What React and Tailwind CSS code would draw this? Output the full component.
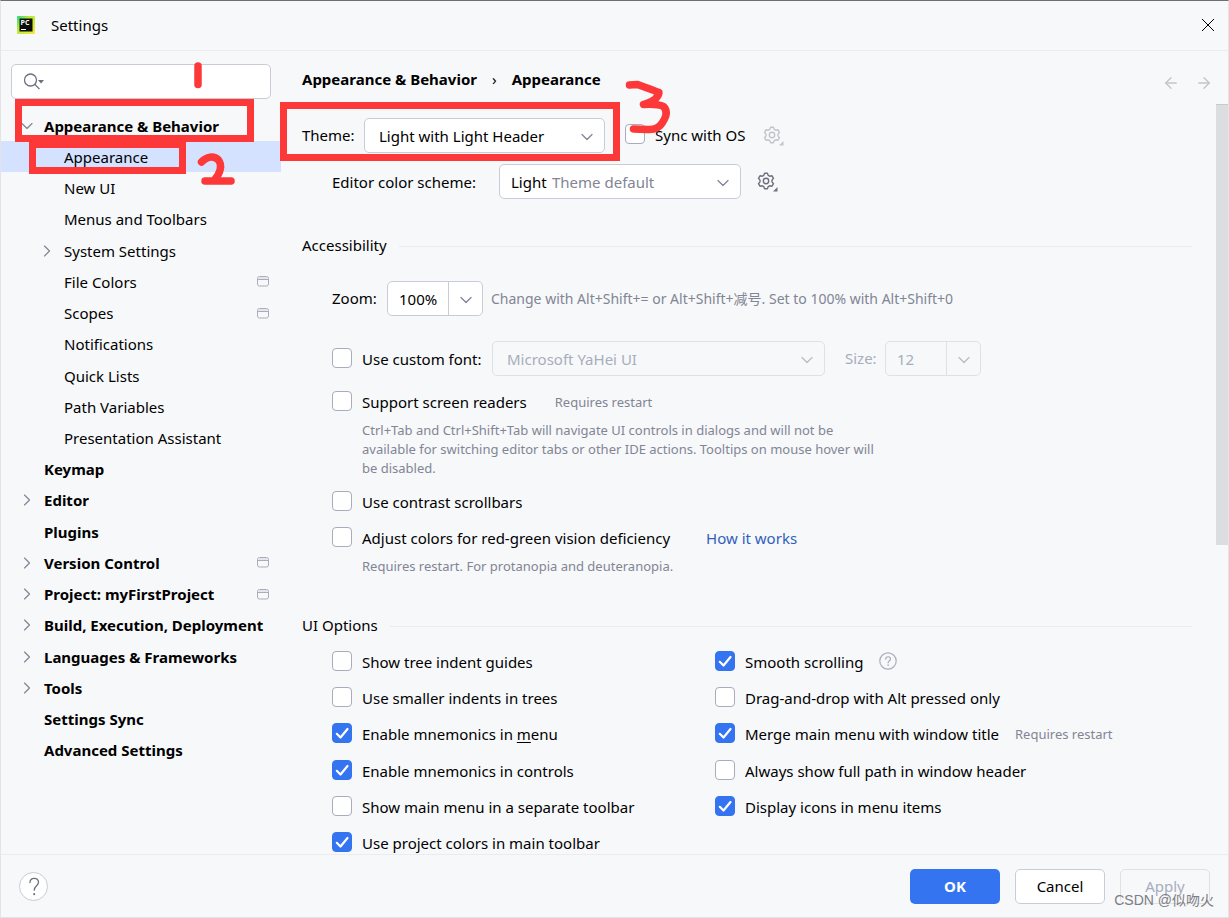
import { useState } from "react";
import { ArrowLeft, ArrowRight, ChevronDown, ChevronRight } from "lucide-react";

const tree = [
  { label: "Appearance & Behavior", top: true, open: true },
  { label: "Appearance", selected: true },
  { label: "New UI" },
  { label: "Menus and Toolbars" },
  { label: "System Settings", arrow: true },
  { label: "File Colors", badge: true },
  { label: "Scopes", badge: true },
  { label: "Notifications" },
  { label: "Quick Lists" },
  { label: "Path Variables" },
  { label: "Presentation Assistant" },
  { label: "Keymap", top: true },
  { label: "Editor", top: true, arrow: true },
  { label: "Plugins", top: true },
  { label: "Version Control", top: true, arrow: true, badge: true },
  { label: "Project: myFirstProject", top: true, arrow: true, badge: true },
  { label: "Build, Execution, Deployment", top: true, arrow: true },
  { label: "Languages & Frameworks", top: true, arrow: true },
  { label: "Tools", top: true, arrow: true },
  { label: "Settings Sync", top: true },
  { label: "Advanced Settings", top: true },
];

const leftOptions = [
  { label: "Show tree indent guides" },
  { label: "Use smaller indents in trees" },
  { label: <>Enable mnemonics in <u className="underline-offset-2">m</u>enu</>, on: true },
  { label: "Enable mnemonics in controls", on: true },
  { label: "Show main menu in a separate toolbar" },
  { label: "Use project colors in main toolbar", on: true },
];

const rightOptions = [
  { label: "Smooth scrolling", on: true, help: true },
  { label: "Drag-and-drop with Alt pressed only" },
  { label: "Merge main menu with window title", on: true, note: "Requires restart" },
  { label: "Always show full path in window header" },
  { label: "Display icons in menu items", on: true },
];

function Logo() {
  return (
    <svg className="h-[18px] w-[18px]" viewBox="0 0 18 18" aria-hidden="true">
      <defs>
        <linearGradient id="pc" x1="0" y1="0" x2="1" y2="1">
          <stop offset="0" stopColor="#21d789" />
          <stop offset="0.35" stopColor="#b5e83a" />
          <stop offset="1" stopColor="#f5ea3d" />
        </linearGradient>
      </defs>
      <rect width="18" height="18" rx="1" fill="url(#pc)" />
      <rect x="2.5" y="2.5" width="13" height="13" fill="#0b0f0c" />
      <text x="3.5" y="9" fontSize="7" fontWeight="700" fill="#fff" fontFamily="Open Sans, sans-serif">PC</text>
      <rect x="4" y="13" width="5" height="1" fill="#fff" />
    </svg>
  );
}

function ProjectBadge() {
  return (
    <svg className="h-[11px] w-[12px]" viewBox="0 0 12 11" fill="none" stroke="#a8adbd" aria-hidden="true">
      <rect x="0.5" y="0.5" width="11" height="9.5" rx="2" />
      <path d="M1 3.5h10" />
      <path d="M1.5 2h9" stroke="#dfe1e8" strokeWidth="1.5" />
    </svg>
  );
}

function Gear({ dim }) {
  return (
    <button type="button" aria-label="Scheme options" disabled={dim} className={dim ? "text-[#c2c4cb]" : "text-[#6c707e]"}>
      <svg className="h-[20px] w-[22px]" viewBox="0 0 22 20" fill="none" stroke="currentColor" strokeWidth="1.4" strokeLinejoin="round">
        <path d="M7.6 1.2h2.8l.8 2.1 1.5.9 2.3-.4 1.5 2.5-1.5 1.8v1.8l1.5 1.8-1.5 2.5-2.3-.4-1.5.9-.8 2.1H7.6l-.8-2.1-1.5-.9-2.3.4-1.5-2.5L3 9.9V8.1L1.5 6.3 3 3.8l2.3.4 1.5-.9z" />
        <circle cx="9" cy="9" r="2.7" />
        <path d="M20.5 15v4.5H16z" fill="currentColor" stroke="none" />
      </svg>
    </button>
  );
}

function Combo({ id, label, value, hint, split, disabled, className }) {
  return (
    <div
      className={`relative flex h-[35px] shrink-0 overflow-hidden rounded-[5px] border ${
        disabled ? "border-[#dfe1e5] text-[#a8adbd]" : "border-[#c9ccd6] bg-white text-black"
      } ${className}`}
    >
      <select id={id} aria-label={label} disabled={disabled} className="w-full appearance-none bg-transparent pl-[11px] opacity-100 outline-none">
        <option>{value}</option>
      </select>
      {hint && <span className="pointer-events-none absolute top-[5px] left-[52px] text-[#818594]">{hint}</span>}
      <span
        className={`pointer-events-none absolute inset-y-0 right-0 flex w-[34px] items-center justify-center pt-[2px] ${
          split ? "border-l border-inherit" : ""
        }`}
      >
        <ChevronDown className={disabled ? "h-5 w-5 text-[#b9bcc6]" : "h-5 w-5 text-[#818594]"} strokeWidth={1.5} />
      </span>
    </div>
  );
}

function Check({ label, on = false }) {
  const [checked, setChecked] = useState(on);
  return (
    <label className="flex h-6 shrink-0 items-center gap-[10px] whitespace-nowrap">
      <span className="relative mb-[2px] h-5 w-5">
        <input
          type="checkbox"
          checked={checked}
          onChange={() => setChecked(!checked)}
          className="block h-5 w-5 appearance-none rounded-[4px] border border-[#a8adbd] bg-white checked:border-[#3574f0] checked:bg-[#3574f0]"
        />
        {checked && (
          <svg className="pointer-events-none absolute inset-0" viewBox="0 0 20 20" fill="none" stroke="#fff" strokeWidth="2.2" strokeLinecap="round" strokeLinejoin="round">
            <path d="M4.8 10.8l3.7 3.7L15.5 6" />
          </svg>
        )}
      </span>
      <span>{label}</span>
    </label>
  );
}

function SectionTitle({ children, className }) {
  return (
    <div className={`flex h-6 items-center gap-3 ${className}`}>
      <h2 className="pb-[2px]">{children}</h2>
      <div className="h-px flex-1 bg-[#ebecf0]" />
    </div>
  );
}

function Sidebar() {
  return (
    <aside className="w-[280px] shrink-0">
      <div className="px-[10px] pt-[13px]">
        <label className="flex h-[35px] items-center rounded-[5px] border border-[#c9ccd6] bg-white pl-[11px]">
          <svg className="h-[18px] w-[21px] shrink-0" viewBox="0 0 21 18" fill="none" stroke="#6c707e" strokeWidth="1.3" aria-hidden="true">
            <circle cx="7.5" cy="7" r="6" />
            <path d="M11.7 11.3l4.8 4.8" />
            <path d="M15 7h6l-3 3.5z" fill="#6c707e" stroke="none" />
          </svg>
          <input type="text" aria-label="Search settings" className="w-full min-w-0 bg-transparent pl-2 outline-none" />
        </label>
      </div>
      <ul className="mt-[11px] grid h-[656px] auto-rows-fr">
        {tree.map((item) => (
          <li
            key={item.label}
            className={`flex items-center ${item.top ? "pl-[16px] font-bold" : "pl-[36px]"} ${item.selected ? "bg-[#d4e2ff]" : ""}`}
          >
            <span className="flex w-[27px] shrink-0 text-[#818594]">
              {item.open && <ChevronDown className="h-5 w-5" strokeWidth={1.4} />}
              {item.arrow && <ChevronRight className="h-5 w-5" strokeWidth={1.4} />}
            </span>
            <a href="#" className="flex-1 whitespace-nowrap">{item.label}</a>
            {item.badge && <span className="pr-[12px]"><ProjectBadge /></span>}
          </li>
        ))}
      </ul>
    </aside>
  );
}

// red hand-drawn marks on top of the dialog
function Marks() {
  return (
    <svg className="pointer-events-none absolute -top-px -left-px h-[200px] w-[700px]" viewBox="0 0 700 200" fill="none" stroke="#fc3838" strokeWidth="7" aria-hidden="true">
      <rect x="18.5" y="102.5" width="232" height="36" />
      <rect x="32.5" y="144.5" width="150" height="26" />
      <rect x="283.5" y="105.5" width="333" height="52" />
      <g strokeWidth="7.5" strokeLinecap="round" strokeLinejoin="round">
        <path d="M198 66v18.5" />
        <path d="M201.500 162c5-5 12-7 17-2 4 5 2 13-4 20" />
        <path d="M205 181h26" />
        <path d="M629.500 85l8-.5c8 3 15 5 21.500 8-1 7-8 9-15.500 12 9-.5 16 0 20 2 4 4 3 10-1 16-3 5-8 7.500-15 7l-14-.5" />
      </g>
    </svg>
  );
}

export default function App() {
  return (
    <div className="relative flex h-screen flex-col overflow-hidden border border-[#e3e4e8] border-t-[#6e6e73] bg-[#f7f8fa] font-['Noto_Sans','Noto_Sans_CJK_SC',sans-serif] text-[15px] leading-6 text-black">
      <header className="flex h-[50px] shrink-0 items-center border-b border-[#ebecf0] pr-[13px] pb-[2px] pl-4">
        <Logo />
        <h1 className="ml-4 flex-1">Settings</h1>
        <button type="button" aria-label="Close">
          <svg className="h-[14px] w-[14px]" viewBox="0 0 14 14" stroke="#000">
            <path d="M1 1l12 12M13 1L1 13" />
          </svg>
        </button>
      </header>

      <div className="flex min-h-0 flex-1">
        <Sidebar />
        <main className="flex min-w-0 flex-1 flex-col">
          <div className="flex h-[53px] shrink-0 items-center pt-[2px] pr-[15px] pl-[21px]">
            <nav className="flex flex-1 items-center gap-[15px] font-bold">
              <a href="#">Appearance & Behavior</a>
              <span className="font-normal">›</span>
              <a href="#">Appearance</a>
            </nav>
            <div className="flex gap-[15px] pt-2 text-[#c4c5c9]">
              <button type="button" aria-label="Back"><ArrowLeft className="h-[18px] w-[18px]" strokeWidth={1.8} /></button>
              <button type="button" aria-label="Forward"><ArrowRight className="h-[18px] w-[18px]" strokeWidth={1.8} /></button>
            </div>
          </div>

          <div className="flex min-h-0 flex-1">
            <div className="min-w-0 flex-1 overflow-hidden pt-[14px] pr-6 pl-[21px]">
              <div className="flex items-center">
                <label htmlFor="theme" className="w-[62px] shrink-0 pb-[2px]">Theme:</label>
                <Combo id="theme" value="Light with Light Header" className="w-[241px] pl-[3px]" />
                <div className="ml-5 pb-[2px]"><Check label="Sync with OS" /></div>
                <div className="ml-[18px] flex"><Gear dim /></div>
              </div>

              <div className="mt-[11px] flex items-center pl-[30px]">
                <label htmlFor="scheme" className="w-[167px] shrink-0">Editor color scheme:</label>
                <Combo id="scheme" value="Light" hint="Theme default" className="w-[242px]" />
                <div className="ml-4 flex"><Gear /></div>
              </div>

              <SectionTitle className="mt-[35px]">Accessibility</SectionTitle>
              <div className="pl-[30px]">
                <div className="mt-[23px] flex items-center">
                  <label htmlFor="zoom" className="w-[55px] shrink-0 pb-[2px]">Zoom:</label>
                  <Combo id="zoom" value="100%" split className="w-[96px]" />
                  <span className="ml-2 text-[14px] whitespace-nowrap text-[#818594]">
                    Change with Alt+Shift+= or Alt+Shift+减号. Set to 100% with Alt+Shift+0
                  </span>
                </div>

                <div className="mt-[25px] flex items-center">
                  <div className="w-[160px] shrink-0"><Check label="Use custom font:" /></div>
                  <Combo id="font" label="Font" value="Microsoft YaHei UI" disabled className="w-[333px] pl-[3px]" />
                  <label htmlFor="size" className="ml-5 w-[40px] shrink-0 pb-[2px] text-[#a8adbd]">Size:</label>
                  <Combo id="size" value="12" split disabled className="w-[96px]" />
                </div>

                <div className="mt-[14px] flex items-center gap-7">
                  <Check label="Support screen readers" />
                  <span className="text-[13px] text-[#818594]">Requires restart</span>
                </div>
                <p className="mt-[7px] max-w-[560px] pl-[30px] text-[13px] leading-[19px] text-[#818594]">
                  Ctrl+Tab and Ctrl+Shift+Tab will navigate UI controls in dialogs and will not be
                  <br />
                  available for switching editor tabs or other IDE actions. Tooltips on mouse hover will
                  <br />
                  be disabled.
                </p>

                <div className="mt-3 flex"><Check label="Use contrast scrollbars" /></div>
                <div className="mt-3 flex items-center gap-9">
                  <Check label="Adjust colors for red-green vision deficiency" />
                  <a href="#" className="text-[#315fbd]">How it works</a>
                </div>
                <p className="mt-[7px] pl-[30px] text-[13px] leading-[19px] text-[#818594]">
                  Requires restart. For protanopia and deuteranopia.
                </p>
              </div>

              <SectionTitle className="mt-[38px]">UI Options</SectionTitle>
              <div className="mt-[6px] flex pl-[30px]">
                {[leftOptions, rightOptions].map((column, c) => (
                  <ul key={c} className="grid h-[217px] w-[383px] shrink-0 grid-rows-6 whitespace-nowrap">
                    {column.map((o, i) => (
                      <li key={i} className="flex items-center gap-4">
                        <Check label={o.label} on={o.on} />
                        {o.help && (
                          <svg className="mb-[2px] h-[18px] w-[18px]" viewBox="0 0 18 18" fill="none" stroke="#a8adbd" strokeWidth="1.2" strokeLinecap="round" aria-label="Help">
                            <circle cx="9" cy="9" r="8.2" />
                            <path d="M6.7 7.2c0-3.2 4.8-3.2 4.8-.2 0 1.8-2.4 1.7-2.4 3.8" />
                            <path d="M9.1 13v.2" strokeWidth="1.6" />
                          </svg>
                        )}
                        {o.note && <span className="text-[13px] text-[#818594]">{o.note}</span>}
                      </li>
                    ))}
                  </ul>
                ))}
              </div>
            </div>
            <div className="w-[12px] shrink-0">
              <div className="h-[441px] border-t border-[#c9cacd] bg-[#dcdde0]" />
            </div>
          </div>
        </main>
      </div>

      <footer className="flex h-[63px] shrink-0 items-center gap-[15px] border-t border-[#ebecf0] px-[18px]">
        <button type="button" aria-label="Help" className="flex h-[29px] w-[29px] items-center justify-center rounded-full border border-[#c9ccd6] bg-white">
          <svg className="h-[19px] w-[12px]" viewBox="0 0 12 19" fill="none" stroke="#6c707e" strokeWidth="1.3" strokeLinecap="round">
            <path d="M2 5.5C2 0 10.5 0 10.5 5.2c0 3.3-4.3 3.8-4.3 8" />
            <path d="M6.2 17v.3" strokeWidth="2" />
          </svg>
        </button>
        <div className="flex-1" />
        <button type="button" className="h-[35px] w-[90px] rounded-[5px] bg-[#3574f0] font-bold text-white">OK</button>
        <button type="button" className="h-[35px] w-[90px] rounded-[5px] border border-[#c9ccd6] bg-white">Cancel</button>
        <button type="button" disabled className="h-[35px] w-[90px] rounded-[5px] border border-[#dfe1e5] text-[#a8adbd]">Apply</button>
      </footer>

      <Marks />
      <span className="pointer-events-none absolute right-[14px] bottom-[7px] font-['Liberation_Sans','Noto_Sans_CJK_SC',sans-serif] text-[14px] leading-5 whitespace-nowrap text-[#7d7e83]">
        CSDN @似吻火
      </span>
    </div>
  );
}
